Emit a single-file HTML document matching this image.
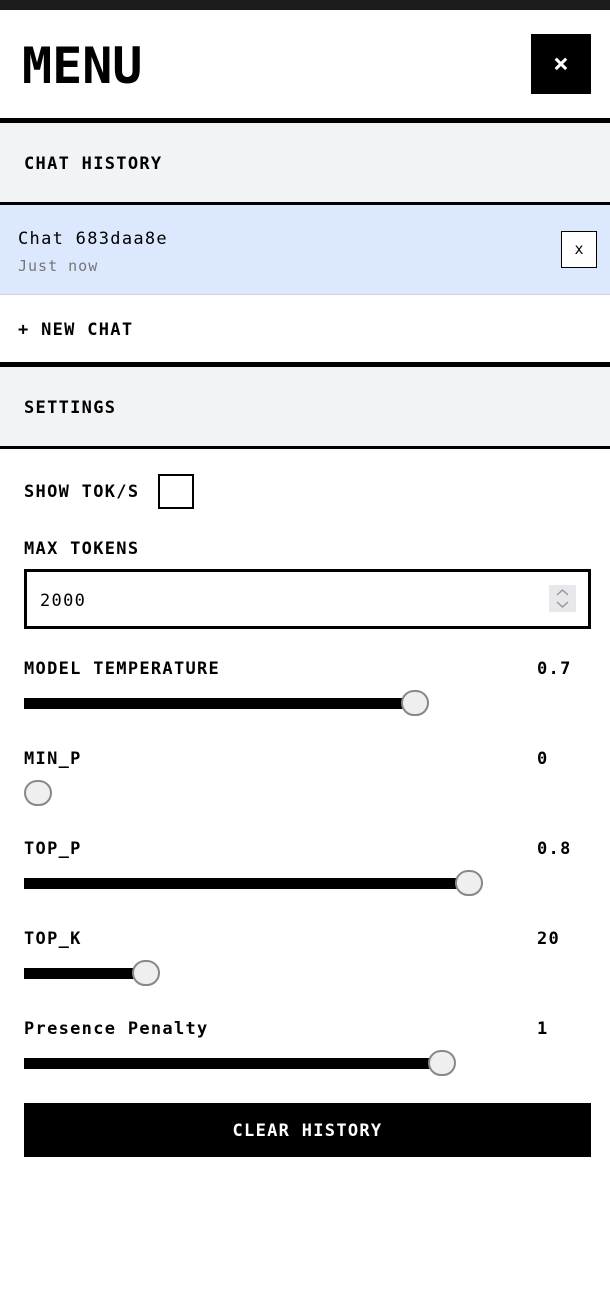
<!DOCTYPE html>
<html><head><style>
*{margin:0;padding:0;box-sizing:border-box}
body{width:610px;height:1300px;background:#fff;font-family:"DejaVu Sans Mono","Liberation Mono",monospace;color:#000;position:relative;overflow:hidden;letter-spacing:1.3px}
.a{position:absolute}
.b{font-weight:bold;font-size:17px}
.lbl{position:absolute;left:24px;font-weight:bold;font-size:17px;line-height:20px}
.val{position:absolute;left:537px;font-weight:bold;font-size:17px;line-height:20px}
.track{position:absolute;left:24px;height:11px;background:#000}
.thumb{position:absolute;width:28px;height:26px;border-radius:13px;background:#efefef;border:2px solid #888}
</style></head><body>
<div class="a" style="left:0;top:0;width:610px;height:10px;background:#1c1c1e"></div>
<div class="a" style="left:22px;top:36px;font-size:50px;font-weight:bold;line-height:60px;letter-spacing:0">MENU</div>
<div class="a" style="left:531px;top:34px;width:60px;height:60px;background:#000;color:#fff;font-weight:bold;font-size:26px;text-align:center;line-height:60px;letter-spacing:0">×</div>
<div class="a" style="left:0;top:118px;width:610px;height:5px;background:#000"></div>
<div class="a" style="left:0;top:123px;width:610px;height:79px;background:#f2f3f5"></div>
<div class="a b" style="left:24px;top:153px;line-height:22px">CHAT HISTORY</div>
<div class="a" style="left:0;top:202px;width:610px;height:3px;background:#000"></div>
<div class="a" style="left:0;top:205px;width:610px;height:90px;background:#dbe8fd;border-bottom:1px solid #d0d4da"></div>
<div class="a" style="left:18px;top:228px;font-size:17px;line-height:22px">Chat 683daa8e</div>
<div class="a" style="left:18px;top:257px;font-size:15px;line-height:18px;color:#777;letter-spacing:1px">Just now</div>
<div class="a" style="left:561px;top:231px;width:36px;height:37px;background:#fff;border:1px solid #000;font-size:15px;text-align:center;line-height:35px;letter-spacing:0">x</div>
<div class="a b" style="left:18px;top:319px;line-height:22px">+ NEW CHAT</div>
<div class="a" style="left:0;top:362px;width:610px;height:5px;background:#000"></div>
<div class="a" style="left:0;top:367px;width:610px;height:79px;background:#f2f3f5"></div>
<div class="a b" style="left:24px;top:397px;line-height:22px">SETTINGS</div>
<div class="a" style="left:0;top:446px;width:610px;height:3px;background:#000"></div>
<div class="lbl" style="top:482px">SHOW TOK/S</div>
<div class="a" style="left:158px;top:474px;width:36px;height:35px;border:2px solid #000"></div>
<div class="lbl" style="top:539px">MAX TOKENS</div>
<div class="a" style="left:24px;top:569px;width:567px;height:60px;border:3px solid #000"></div>
<div class="a" style="left:40px;top:591px;font-size:17px;line-height:20px">2000</div>
<div class="a" style="left:549px;top:585px;width:27px;height:27px;background:#e8e8ec"></div>
<svg class="a" style="left:549px;top:585px" width="27" height="27"><path d="M8 10l5.5-5 5.5 5M8 17l5.5 5 5.5-5" fill="none" stroke="#999" stroke-width="1.5"/></svg>
<div class="lbl" style="top:659px">MODEL TEMPERATURE</div><div class="val" style="top:659px">0.7</div>
<div class="track" style="top:698px;width:390px"></div><div class="thumb" style="left:401px;top:690px"></div>
<div class="lbl" style="top:749px">MIN_P</div><div class="val" style="top:749px">0</div>
<div class="thumb" style="left:24px;top:780px"></div>
<div class="lbl" style="top:839px">TOP_P</div><div class="val" style="top:839px">0.8</div>
<div class="track" style="top:878px;width:444px"></div><div class="thumb" style="left:455px;top:870px"></div>
<div class="lbl" style="top:929px">TOP_K</div><div class="val" style="top:929px">20</div>
<div class="track" style="top:968px;width:120px"></div><div class="thumb" style="left:132px;top:960px"></div>
<div class="lbl" style="top:1019px">Presence Penalty</div><div class="val" style="top:1019px">1</div>
<div class="track" style="top:1058px;width:416px"></div><div class="thumb" style="left:428px;top:1050px"></div>
<div class="a" style="left:24px;top:1103px;width:567px;height:54px;background:#000;color:#fff;font-weight:bold;font-size:17px;text-align:center;line-height:56px">CLEAR HISTORY</div>
</body></html>
